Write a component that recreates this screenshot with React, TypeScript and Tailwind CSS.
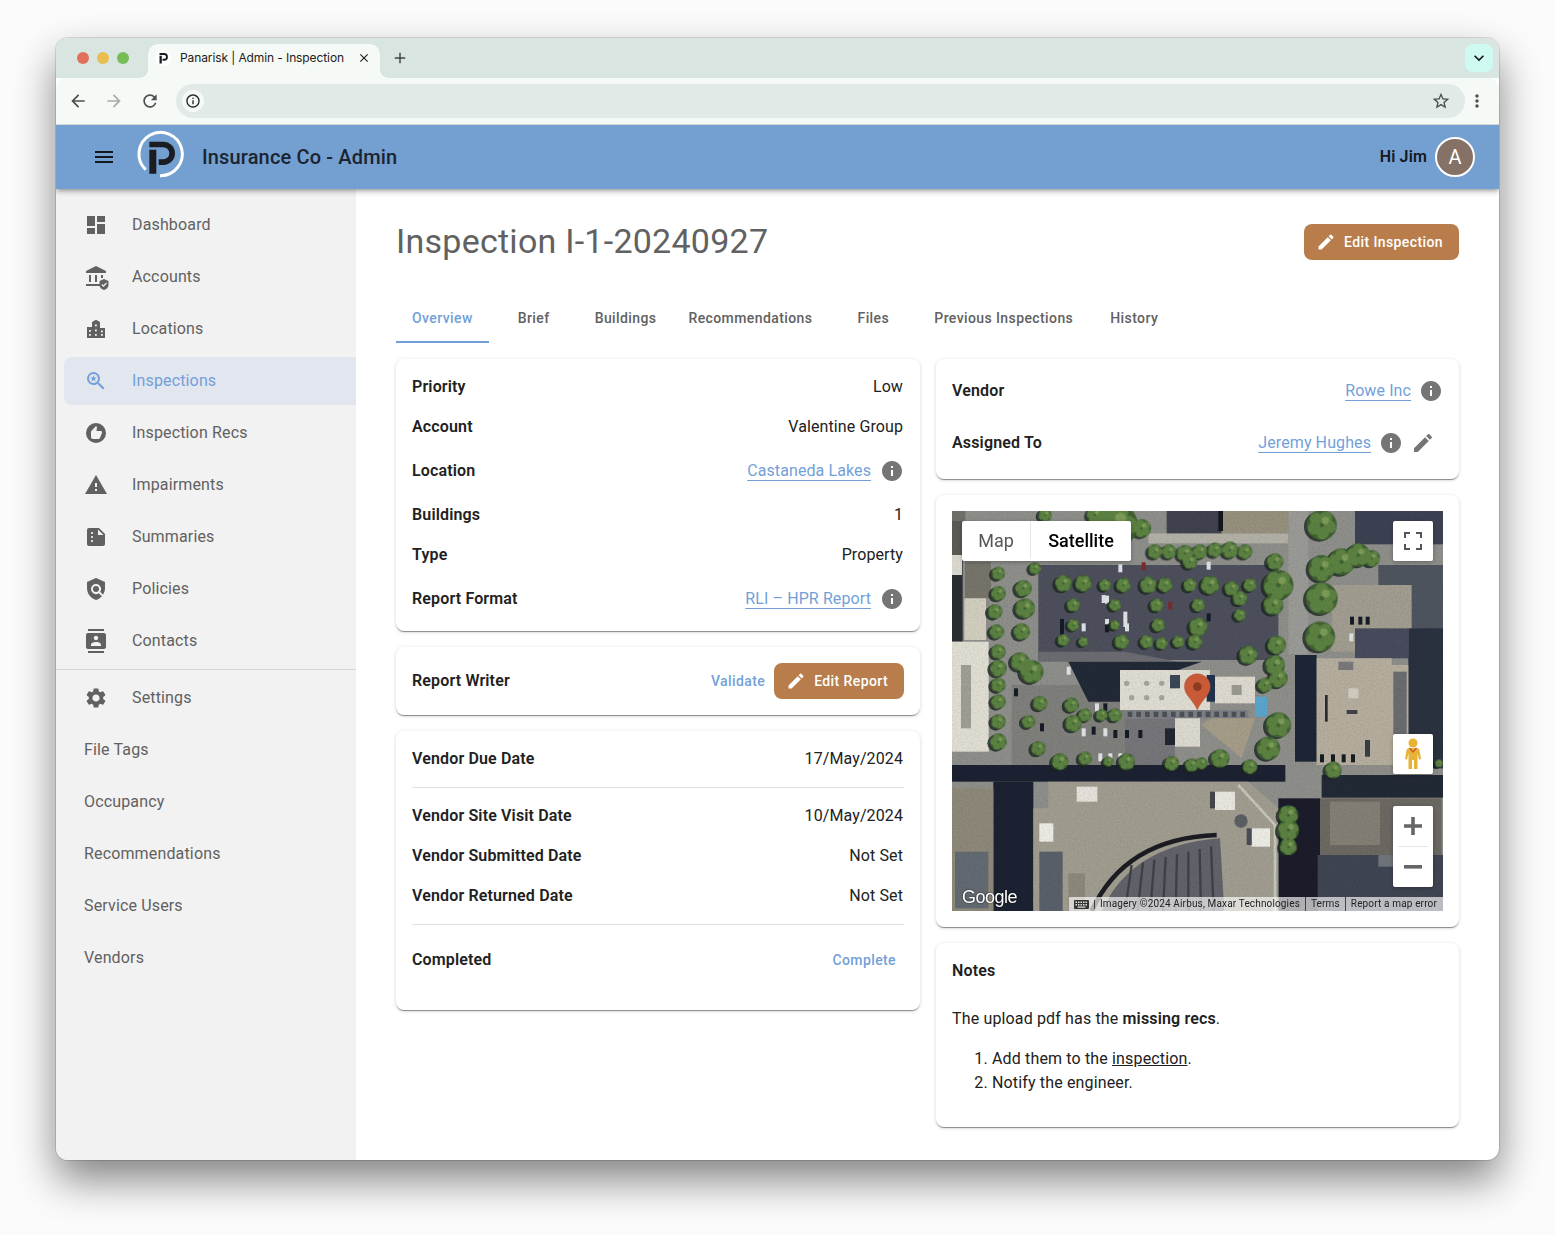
import React from 'react'
import {
  MdArrowBack,
  MdArrowForward,
  MdClose,
  MdContacts,
  MdDashboard,
  MdEdit,
  MdInfo,
  MdKeyboardArrowDown,
  MdMenu,
  MdMoreVert,
  MdOutlineInfo,
  MdOutlineStarBorder,
  MdPolicy,
  MdRecommend,
  MdRefresh,
  MdAdd,
  MdSavedSearch,
  MdSettings,
  MdSummarize,
  MdWarning,
} from 'react-icons/md'

const PPath = () => (
  <>
    <path d="M58 50H100A35 35 0 0 1 100 120H86V103H100A18 18 0 0 0 100 67H58Z" />
    <path d="M58 74H79V146H58Z" />
  </>
)

const Logo = () => (
  <svg width="60" height="60" viewBox="0 0 180 180" fill="none" className="overflow-visible">
    <path d="M47 134A65 65 0 1 1 90 152" stroke="#fff" strokeWidth="9" />
    <g fill="#1b1d22">
      <PPath />
    </g>
  </svg>
)

const AccountsIcon = () => (
  <svg width="24" height="24" viewBox="0 0 24 24" fill="#616161" className="overflow-visible">
    <path d="M12 1 22 6V8H2V6Z" />
    <rect x="5" y="10" width="2" height="7" />
    <rect x="11" y="10" width="2" height="7" />
    <rect x="17" y="10" width="2" height="3" />
    <rect x="2" y="19" width="15" height="2" />
    <path d="M20 14 24.500 16V20C24.500 22.500 22.500 24.500 20 25 17.500 24.500 15.500 22.500 15.500 20V16Z" />
    <path d="M17.800 19.500 19.500 21.200 22.500 18" stroke="#f2f2f2" strokeWidth="1.200" fill="none" />
  </svg>
)

const LocationsIcon = () => (
  <svg width="24" height="24" viewBox="0 0 24 24" fill="#616161">
    <path d="M3 21V10H8V5L11.500 3H12.500L16 5V11H21V21Z" />
    <g fill="#f2f2f2">
      <rect x="5" y="13" width="1.800" height="1.800" />
      <rect x="5" y="17" width="1.800" height="1.800" />
      <rect x="11" y="7.500" width="1.800" height="1.800" />
      <rect x="11" y="12.500" width="1.800" height="1.800" />
      <rect x="11" y="17" width="1.800" height="1.800" />
      <rect x="17" y="13.500" width="1.800" height="1.800" />
      <rect x="17" y="17" width="1.800" height="1.800" />
    </g>
  </svg>
)

type NavEntry = { label: string; icon?: React.ReactNode; active?: boolean }

const iconClass = 'size-6 shrink-0'

const topNav: NavEntry[] = [
  { label: 'Dashboard', icon: <MdDashboard className={iconClass} /> },
  { label: 'Accounts', icon: <AccountsIcon /> },
  { label: 'Locations', icon: <LocationsIcon /> },
  { label: 'Inspections', icon: <MdSavedSearch className={iconClass} />, active: true },
  { label: 'Inspection Recs', icon: <MdRecommend className={iconClass} /> },
  { label: 'Impairments', icon: <MdWarning className={iconClass} /> },
  { label: 'Summaries', icon: <MdSummarize className={iconClass} /> },
  { label: 'Policies', icon: <MdPolicy className={iconClass} /> },
  { label: 'Contacts', icon: <MdContacts className={iconClass} /> },
]

const bottomNav: NavEntry[] = [
  { label: 'Settings', icon: <MdSettings className={iconClass} /> },
  { label: 'File Tags' },
  { label: 'Occupancy' },
  { label: 'Recommendations' },
  { label: 'Service Users' },
  { label: 'Vendors' },
]

const NavItem = ({ label, icon, active }: NavEntry) => (
  <div
    className={`ml-2 flex h-12 items-center gap-6 rounded-l-lg pl-5 ${
      active ? 'bg-[#e1e6ef] text-[#739fd9]' : 'text-[#616161]'
    }`}
  >
    {icon}
    <span>{label}</span>
  </div>
)

const Card = ({ className = '', children }: { className?: string; children: React.ReactNode }) => (
  <div
    className={`rounded-lg bg-white shadow-[0_2px_1px_-1px_rgba(0,0,0,0.32),0_1px_1px_0_rgba(0,0,0,0.14),0_1px_4px_0_rgba(0,0,0,0.14)] ${className}`}
  >
    {children}
  </div>
)

const RowLink = ({ children }: { children: React.ReactNode }) => (
  <a className="tracking-[0.1px] text-[#739fd9] underline underline-offset-[4px] decoration-1">{children}</a>
)

const Info = () => <MdInfo className="size-6 shrink-0 text-[#757575]" />

const labelClass = 'font-semibold text-[#212121]'

const Row = ({ label, value, link, h = 'h-10' }: { label: string; value?: string; link?: string; h?: string }) => (
  <div className={`flex items-center justify-between ${h}`}>
    <span className={labelClass}>{label}</span>
    {link ? (
      <div className="flex items-center gap-[9px]">
        <RowLink>{link}</RowLink>
        <Info />
      </div>
    ) : (
      <span className="pr-px tracking-[0.1px] text-[#212121]">{value}</span>
    )}
  </div>
)

const EditButton = ({ label }: { label: string }) => (
  <button className="flex h-9 items-center gap-2 rounded-lg bg-[#b87d4b] pl-3 pr-4 text-sm font-medium tracking-[0.4px] text-white">
    <MdEdit className="size-5" />
    {label}
  </button>
)

const tabs = ['Overview', 'Brief', 'Buildings', 'Recommendations', 'Files', 'Previous Inspections', 'History']

// satellite picture, coordinates follow a 3x crop of the map
const trees: number[][] = [
  [510, 60, 68], [590, 70, 28], [630, 140, 22], [672, 140, 22], [720, 145, 25], [765, 140, 22], [810, 135, 22],
  [855, 135, 25], [900, 140, 22], [735, 170, 22], [300, 30, 20], [450, 30, 25], [1130, 60, 45], [1190, 170, 40],
  [1130, 190, 40], [1240, 150, 35], [1280, 160, 25], [1130, 280, 48], [1125, 395, 45], [990, 170, 25], [1000, 240, 45],
  [985, 300, 30], [995, 420, 28], [990, 480, 30], [1000, 520, 28], [1000, 660, 38], [970, 730, 35], [910, 450, 28],
  [960, 540, 22], [160, 205, 20], [160, 265, 22], [150, 320, 22], [155, 380, 22], [160, 440, 22], [160, 490, 25],
  [160, 540, 22], [160, 590, 22], [160, 650, 22], [160, 710, 25], [270, 190, 18], [235, 250, 25], [240, 310, 30],
  [230, 380, 25], [225, 470, 28], [260, 500, 35], [285, 595, 22], [250, 650, 20], [280, 730, 22], [355, 235, 25],
  [415, 235, 25], [480, 240, 18], [535, 240, 22], [610, 240, 25], [660, 240, 22], [735, 240, 20], [795, 240, 28],
  [860, 250, 22], [915, 240, 20], [385, 300, 20], [510, 300, 18], [635, 300, 20], [760, 300, 20], [885, 280, 22],
  [385, 360, 18], [510, 360, 15], [640, 360, 20], [760, 365, 28], [885, 330, 18], [355, 405, 18], [415, 410, 15],
  [530, 410, 22], [605, 410, 20], [650, 415, 18], [700, 410, 18], [750, 410, 22], [380, 600, 22], [385, 655, 25],
  [420, 630, 20], [470, 630, 18], [510, 630, 20], [345, 770, 25], [420, 760, 20], [490, 770, 15], [545, 770, 25],
  [680, 775, 22], [740, 780, 20], [770, 775, 18], [825, 760, 28], [915, 785, 22], [1165, 795, 25], [1030, 930, 30],
  [1030, 975, 32], [1030, 1025, 26], [1482, 775, 12],
]

const cars: number[][] = [
  [520, 178, 1], [590, 172, 2], [785, 170, 1], [480, 272, 1], [535, 320, 1], [480, 342, 1], [535, 342, 1], [345, 342, 0],
  [345, 365, 0], [410, 355, 1], [480, 358, 0], [540, 355, 1], [470, 270, 1], [365, 485, 1], [207, 550, 0], [450, 595, 1],
  [475, 595, 0], [410, 670, 1], [440, 665, 0], [475, 670, 1], [505, 675, 0], [540, 675, 0], [580, 675, 0], [460, 745, 1],
  [490, 745, 1], [520, 745, 1], [285, 655, 0], [1215, 335, 0], [1240, 335, 0], [1262, 335, 0], [1213, 385, 1], [1125, 748, 0],
  [1158, 748, 0], [1190, 748, 0], [1218, 748, 0], [735, 390, 2], [785, 325, 0], [670, 290, 2],
]

const lobes = (x: number, y: number, r: number, i: number) =>
  [0, 1, 2, 3, 4].map((k) => {
    const a = ((i * 37 + k * 72) * Math.PI) / 180
    return { cx: x + Math.cos(a) * r * 0.55, cy: y + Math.sin(a) * r * 0.55, r: r * 0.42, key: k }
  })

const SatelliteMap = () => (
  <svg viewBox="21 18 1473 1200" preserveAspectRatio="none" className="block h-full w-full">
    <defs>
      <filter id="soft" x="-5%" y="-5%" width="110%" height="110%">
        <feGaussianBlur stdDeviation="2.200" />
      </filter>
      <filter id="grain" x="0" y="0" width="100%" height="100%">
        <feTurbulence type="fractalNoise" baseFrequency="0.2" numOctaves="2" seed="4" />
        <feColorMatrix values="0 0 0 0 0  0 0 0 0 0  0 0 0 0 0  0 0 0 1.400 -0.550" />
      </filter>
    </defs>
    <g filter="url(#soft)">
      <rect x="21" y="18" width="1473" height="1200" fill="#8e8e8a" />
      {/* ground and roads */}
      <rect x="610" y="85" width="420" height="30" fill="#b3b0a6" />
      <rect x="1030" y="18" width="60" height="430" fill="#9a9a96" />
      <rect x="665" y="18" width="165" height="67" fill="#3f424f" />
      <rect x="830" y="18" width="200" height="67" fill="#96907d" />
      <rect x="1230" y="18" width="264" height="100" fill="#3d4352" />
      <rect x="1300" y="180" width="194" height="200" fill="#50545f" />
      <rect x="1160" y="240" width="240" height="200" fill="#a19d90" />
      <rect x="1230" y="370" width="160" height="90" fill="#474c5b" />
      <rect x="1390" y="370" width="104" height="420" fill="#2b3140" />
      <rect x="280" y="180" width="720" height="285" fill="#4d505c" />
      <path d="M280 440H540L700 470H280Z" fill="#6a6c72" />
      <path d="M200 540H540V780H200Z" fill="#7f7f7c" />
      <path d="M540 640H690V780H540Z" fill="#74757a" />
      <path d="M370 470H770L700 495 525 495V590H430Z" fill="#242938" />
      <rect x="1050" y="450" width="65" height="320" fill="#1f2534" />
      <rect x="21" y="780" width="1000" height="50" fill="#1a2030" />
      <rect x="1130" y="810" width="364" height="68" fill="#232936" />
      <rect x="145" y="830" width="120" height="388" fill="#1b2130" />
      <rect x="1000" y="880" width="125" height="338" fill="#1a1f2c" />
      <rect x="21" y="18" width="40" height="30" fill="#72706a" />
      <rect x="21" y="48" width="160" height="102" fill="#5a5c56" />
      <rect x="820" y="18" width="14" height="60" fill="#16181f" />
      {/* left slab */}
      <rect x="21" y="150" width="32" height="260" fill="#2c2f36" />
      <rect x="21" y="150" width="30" height="60" fill="#dcdad0" />
      <rect x="60" y="170" width="78" height="110" fill="#77756b" />
      <rect x="58" y="280" width="65" height="125" fill="#d2cebf" />
      <rect x="21" y="410" width="110" height="330" fill="#e0ddd2" />
      <rect x="48" y="480" width="30" height="190" fill="#a19e94" />
      <rect x="21" y="850" width="124" height="368" fill="#8d8879" />
      <rect x="30" y="1040" width="100" height="170" fill="#636a72" />
      {/* center building */}
      <rect x="525" y="495" width="270" height="120" fill="#dfdcd2" />
      <rect x="810" y="515" width="120" height="80" fill="#ddd9cf" />
      <rect x="675" y="510" width="30" height="40" fill="#3a4658" />
      <rect x="785" y="510" width="25" height="80" fill="#22304b" />
      <rect x="540" y="615" width="370" height="25" fill="#7b7f85" />
      <rect x="690" y="640" width="75" height="85" fill="#dcd9ce" />
      <rect x="660" y="670" width="30" height="50" fill="#23262e" />
      <rect x="930" y="575" width="36" height="60" fill="#5aa6cd" />
      <path d="M770 660 890 760 930 640H800Z" fill="#a59d88" />
      <g fill="#a5a59e">
        {[545, 605, 650, 560, 605, 650].map((x, i) => (
          <circle key={i} cx={x} cy={i < 3 ? 535 : 578} r="8" />
        ))}
      </g>
      <rect x="860" y="540" width="30" height="30" fill="#9b9a92" />
      <g fill="#4d5157">
        {Array.from({ length: 14 }, (_, i) => (
          <rect key={i} x={548 + i * 26} y="620" width="14" height="16" />
        ))}
      </g>
      {/* right building */}
      <path d="M1115 460H1340V480H1390V780H1115Z" fill="#b5ae9e" />
      <rect x="1180" y="470" width="45" height="25" fill="#777a78" />
      <rect x="1140" y="570" width="8" height="80" fill="#2a2c30" />
      <rect x="1210" y="550" width="30" height="30" fill="#d0ccc0" />
      <rect x="1205" y="615" width="32" height="12" fill="#40434a" />
      <rect x="1260" y="705" width="15" height="50" fill="#3a3d44" />
      <rect x="1345" y="500" width="40" height="190" fill="#6a6c70" />
      {/* big building */}
      <path d="M265 910H310V830H910L1000 910V1218H265Z" fill="#a09d90" />
      <path d="M880 840 990 960V1218" stroke="#c7c4b9" strokeWidth="8" fill="none" />
      <rect x="395" y="845" width="62" height="45" fill="#e4e2da" />
      <rect x="810" y="860" width="60" height="55" fill="#e8e6de" />
      <rect x="795" y="860" width="15" height="50" fill="#45474c" />
      <rect x="283" y="955" width="42" height="55" fill="#ecebe4" />
      <rect x="920" y="970" width="55" height="55" fill="#ecebe4" />
      <rect x="905" y="970" width="15" height="50" fill="#4c4e54" />
      <circle cx="888" cy="948" r="20" fill="#5c5f63" />
      <rect x="283" y="1040" width="70" height="178" fill="#5a616b" />
      <rect x="370" y="1105" width="50" height="113" fill="#8c887a" />
      <path d="M470 1218Q560 1020 825 1000L838 1218Z" fill="#62646a" />
      <path d="M440 1218Q540 1000 815 990" stroke="#1c1e24" strokeWidth="14" fill="none" />
      <g stroke="#3f4147" strokeWidth="7">
        {Array.from({ length: 8 }, (_, i) => (
          <path key={i} d={`M${540 + i * 38} ${1218}L${560 + i * 34} ${1080 - i * 8}`} />
        ))}
      </g>
      {/* bottom right */}
      <rect x="1125" y="880" width="365" height="170" fill="#6c6862" />
      <rect x="1155" y="890" width="150" height="130" fill="#847f74" />
      <rect x="1118" y="1050" width="376" height="168" fill="#3f4452" />
      <rect x="1300" y="1050" width="45" height="35" fill="#70747c" />
      {/* cars */}
      {cars.map(([x, y, c], i) => (
        <rect key={i} x={x} y={y} width="12" height="24" fill={c === 1 ? '#dfe2e5' : c === 2 ? '#7d2a2a' : '#191c26'} />
      ))}
      {/* tree shadows, then crowns */}
      {trees.map(([x, y, r], i) => (
        <circle key={i} cx={x - 8} cy={y + 5} r={r} fill="#1c2622" opacity="0.8" />
      ))}
      {trees.map(([x, y, r], i) => (
        <circle key={i} cx={x} cy={y} r={r} fill="#3f6030" />
      ))}
      {trees.map(([x, y, r], i) =>
        lobes(x, y, r, i).map((b) => <circle key={`${i}-${b.key}`} cx={b.cx} cy={b.cy} r={b.r} fill="#5c8243" />),
      )}
      {trees.map(([x, y, r], i) => (
        <circle key={i} cx={x + r * 0.25} cy={y - r * 0.3} r={r * 0.25} fill="#7c9c58" />
      ))}
    </g>
    <rect x="21" y="18" width="1473" height="1200" filter="url(#grain)" opacity="0.12" />
    <path
      d="M757 615C745 585 718 570 718 545A39 39 0 0 1 796 545C796 570 769 585 757 615Z"
      fill="#c95a37"
      stroke="#a84a2c"
      strokeWidth="1"
    />
    <circle cx="757" cy="545" r="13" fill="#8c3a20" />
  </svg>
)

const Pegman = () => (
  <svg width="18" height="32" viewBox="0 0 18 32">
    <circle cx="9" cy="5" r="4.500" fill="#e8b234" />
    <path d="M5 10H13C14.500 10 15 11 15.500 12.500L17 21 15 21.500 13.500 15.500V31H10V22H8V31H4.500V15.500L3 21.500 1 21 2.500 12.500C3 11 3.500 10 5 10Z" fill="#e8b234" />
    <path d="M5.500 10 9 14 12.500 10" stroke="#c9572f" strokeWidth="1.200" fill="none" />
  </svg>
)

const KeyboardGlyph = () => (
  <svg width="15" height="9" viewBox="0 0 15 9">
    <rect width="15" height="9" rx="1" fill="#333" />
    <g fill="#e4e4e4">
      {[1.5, 4, 6.5, 9, 11.5].map((x) => (
        <rect key={x} x={x} y="1.500" width="1.500" height="1.500" />
      ))}
      {[1.5, 4, 6.5, 9, 11.5].map((x) => (
        <rect key={x} x={x} y="4" width="1.500" height="1.500" />
      ))}
      <rect x="3.500" y="6.500" width="8" height="1.200" />
    </g>
  </svg>
)

const mapControl = 'absolute flex items-center justify-center bg-white shadow-[0_1px_4px_rgba(0,0,0,0.3)]'

const MapPanel = () => (
  <div className="relative h-[400px] overflow-hidden">
    <SatelliteMap />
    <div className="absolute left-[10px] top-[10px] flex h-10 rounded-[2px] bg-white pb-[2px] text-[18px] tracking-normal shadow-[0_1px_4px_rgba(0,0,0,0.3)]">
      <span className="flex w-[69px] items-center justify-center border-r border-[#e6e6e6] text-[#565656]">Map</span>
      <span className="flex w-[100px] items-center justify-center font-medium text-black">Satellite</span>
    </div>
    <div className={`${mapControl} right-[10px] top-[10px] size-10 rounded-[2px]`}>
      <svg width="18" height="18" viewBox="0 0 18 18" fill="none" stroke="#555" strokeWidth="2">
        <path d="M1 6V1H6M12 1H17V6M17 12V17H12M6 17H1V12" />
      </svg>
    </div>
    <div className={`${mapControl} right-[10px] top-[223px] size-10 rounded-[2px]`}>
      <Pegman />
    </div>
    <div className={`${mapControl} right-[10px] top-[295px] h-[81px] w-10 flex-col rounded-[2px]`}>
      <span className="flex flex-1 items-center justify-center">
        <svg width="18" height="18" viewBox="0 0 18 18" fill="#666">
          <path d="M7.200 0H10.800V7.200H18V10.800H10.800V18H7.200V10.800H0V7.200H7.200Z" />
        </svg>
      </span>
      <span className="h-px w-[30px] bg-[#e6e6e6]" />
      <span className="flex flex-1 items-center justify-center">
        <svg width="18" height="4" viewBox="0 0 18 4" fill="#666">
          <rect width="18" height="3.600" />
        </svg>
      </span>
    </div>
    <span className="absolute bottom-[3px] left-[10px] font-['Liberation_Sans',sans-serif] text-[18px] leading-[22px] tracking-[-0.5px] text-white [text-shadow:0_0_2px_rgba(0,0,0,0.9)]">
      Google
    </span>
    <div className="absolute bottom-0 right-0 flex h-[14px] items-center bg-white/65 pr-[6px] text-[10px] leading-[14px] tracking-[0.15px] text-[#222]">
      <span className="flex w-[26px] items-center justify-center border-r border-[#444]">
        <KeyboardGlyph />
      </span>
      <span className="border-r border-[#444] px-[5px]">Imagery ©2024 Airbus, Maxar Technologies</span>
      <span className="border-r border-[#444] px-[5px]">Terms</span>
      <span className="pl-[5px]">Report a map error</span>
    </div>
  </div>
)

const BrowserChrome = () => (
  <>
    <div className="flex h-10 items-center bg-[#d8e5e1] pl-[21px] text-[#1f2020]">
      <div className="flex gap-2">
        <span className="size-3 rounded-full bg-[#e0705c]" />
        <span className="size-3 rounded-full bg-[#e9bd4e]" />
        <span className="size-3 rounded-full bg-[#77bc55]" />
      </div>
      <div className="relative ml-[19px] flex h-[34px] w-[232px] items-center self-end rounded-t-[10px] bg-[#f5faf7] pb-[6px] pl-[7px] pr-[9px]">
        <span className="absolute -left-2 bottom-0 size-2 bg-[radial-gradient(circle_at_0_0,transparent_7.5px,#f5faf7_8px)]" />
        <span className="absolute -right-2 bottom-0 size-2 bg-[radial-gradient(circle_at_100%_0,transparent_7.5px,#f5faf7_8px)]" />
        <span className="flex size-[16px] items-center justify-center rounded-full bg-white">
          <svg width="12" height="12" viewBox="40 40 100 110" fill="#1b1d22">
            <PPath />
          </svg>
        </span>
        <span className="ml-[9px] font-['Inter',sans-serif] text-[12px] tracking-[-0.1px]">Panarisk | Admin - Inspection</span>
        <MdClose className="ml-auto size-[14px]" />
      </div>
      <MdAdd className="ml-[11px] size-[18px] text-[#444]" />
      <span className="ml-auto mr-[6px] flex size-7 items-center justify-center rounded-lg bg-[#cffaf2]">
        <MdKeyboardArrowDown className="size-5 text-[#111]" />
      </span>
    </div>
    <div className="relative z-10 flex h-[47px] items-center rounded-t-[10px] border-b border-[#d5dcda] bg-[#f5faf7] pb-[1px] pl-3 text-[#4b4f4e]">
      <MdArrowBack className="size-5" />
      <MdArrowForward className="ml-4 size-5 text-[#a8acab]" />
      <MdRefresh className="ml-4 size-5" />
      <div className="ml-4 flex h-[34px] w-[1289px] items-center justify-between rounded-full bg-[#e1eae7] pl-[6px] pr-[14px]">
        <span className="flex size-[22px] items-center justify-center rounded-full bg-[#f5faf7]">
          <MdOutlineInfo className="size-4 text-[#222]" />
        </span>
        <MdOutlineStarBorder className="size-5" />
      </div>
      <MdMoreVert className="ml-[2px] size-5" />
    </div>
  </>
)

export default function App() {
  return (
    <div className="min-h-[1235px] bg-[#fbfbfb] pl-[56px] pt-[38px] font-['Roboto',sans-serif] text-base tracking-[0.15px]">
      <div className="flex h-[1122px] w-[1443px] flex-col overflow-hidden rounded-xl bg-white shadow-[0_0_0_1px_rgba(0,0,0,0.12),0_20px_42px_rgba(0,0,0,0.48)]">
        <BrowserChrome />

        <header className="relative z-20 flex h-16 shrink-0 items-center bg-[#739fd1] pl-[36px] pr-6 shadow-[0_2px_4px_-1px_rgba(0,0,0,0.3),0_4px_5px_0_rgba(0,0,0,0.14)]">
          <MdMenu className="size-6 text-[#15181d]" />
          <div className="-mt-1 ml-[14px]">
            <Logo />
          </div>
          <h1 className="ml-3 text-xl font-medium text-[#1b2430]">Insurance Co - Admin</h1>
          <div className="ml-auto flex items-center gap-2">
            <span className="font-semibold text-[#15181d]">Hi Jim</span>
            <span className="flex size-10 items-center justify-center rounded-full border-2 border-white bg-[#857166] text-xl text-white">
              A
            </span>
          </div>
        </header>

        <div className="flex min-h-0 flex-1">
          <aside className="w-[300px] shrink-0 bg-[#f2f2f2] pt-3">
            <nav className="flex flex-col gap-1">
              {topNav.map((item) => (
                <NavItem key={item.label} {...item} />
              ))}
            </nav>
            <hr className="my-1 border-[#d6d6d6]" />
            <nav className="flex flex-col gap-1">
              {bottomNav.map((item) => (
                <NavItem key={item.label} {...item} />
              ))}
            </nav>
          </aside>

          <main className="flex-1 px-10 pt-[35px]">
            <div className="flex h-9 items-center justify-between">
              <h2 className="mb-[2px] text-[34px] leading-9 tracking-[0.25px] text-[#616161]">Inspection I-1-20240927</h2>
              <EditButton label="Edit Inspection" />
            </div>

            <div className="mt-[35px] flex h-[48px]">
              {tabs.map((tab, i) => (
                <div
                  key={tab}
                  className={`flex min-w-[90px] items-center justify-center border-b-2 px-4 text-sm font-medium tracking-[0.4px] ${
                    i === 0 ? 'border-[#739fd9] text-[#739fd9]' : 'border-transparent text-[#616161]'
                  }`}
                >
                  {tab}
                </div>
              ))}
            </div>

            <div className="mt-4 grid grid-cols-[524px_523px] gap-4">
              <div className="flex flex-col gap-4">
                <Card className="px-4 py-2">
                  <Row label="Priority" value="Low" />
                  <Row label="Account" value="Valentine Group" />
                  <Row label="Location" link="Castaneda Lakes" h="h-12" />
                  <Row label="Buildings" value="1" />
                  <Row label="Type" value="Property" />
                  <Row label="Report Format" link="RLI – HPR Report" h="h-12" />
                </Card>

                <Card className="flex items-center justify-between p-4">
                  <span className={labelClass}>Report Writer</span>
                  <div className="flex items-center gap-px">
                    <span className="px-2 text-sm font-medium tracking-[0.4px] text-[#739fd9]">Validate</span>
                    <EditButton label="Edit Report" />
                  </div>
                </Card>

                <Card className="h-[279px] px-4 py-2">
                  <Row label="Vendor Due Date" value="17/May/2024" />
                  <hr className="my-2 border-[#e0e0e0]" />
                  <Row label="Vendor Site Visit Date" value="10/May/2024" />
                  <Row label="Vendor Submitted Date" value="Not Set" />
                  <Row label="Vendor Returned Date" value="Not Set" />
                  <hr className="mt-2 border-[#e0e0e0]" />
                  <div className="mt-[15px] flex h-10 items-center justify-between">
                    <span className={labelClass}>Completed</span>
                    <span className="px-2 text-sm font-medium tracking-[0.4px] text-[#739fd9]">Complete</span>
                  </div>
                </Card>
              </div>

              <div className="flex flex-col gap-4">
                <Card className="px-4 pb-[10px] pt-[6px]">
                  <div className="flex h-[52px] items-center justify-between">
                    <span className={labelClass}>Vendor</span>
                    <div className="flex items-center gap-2">
                      <RowLink>Rowe Inc</RowLink>
                      <Info />
                    </div>
                  </div>
                  <div className="flex h-[52px] items-center justify-between">
                    <span className={labelClass}>Assigned To</span>
                    <div className="flex items-center">
                      <RowLink>Jeremy Hughes</RowLink>
                      <span className="ml-2">
                        <Info />
                      </span>
                      <span className="flex w-10 items-center justify-center">
                        <MdEdit className="size-6 text-[#757575]" />
                      </span>
                    </div>
                  </div>
                </Card>

                <Card className="p-4">
                  <MapPanel />
                </Card>

                <Card className="px-4 pb-8 pt-4 text-[#212121]">
                  <div className={labelClass}>Notes</div>
                  <p className="mt-6">
                    The upload pdf has the <strong className="font-semibold">missing recs</strong>.
                  </p>
                  <ol className="mt-4 list-decimal pl-10">
                    <li>
                      Add them to the <a className="underline">inspection</a>.
                    </li>
                    <li>Notify the engineer.</li>
                  </ol>
                </Card>
              </div>
            </div>
          </main>
        </div>
      </div>
    </div>
  )
}
